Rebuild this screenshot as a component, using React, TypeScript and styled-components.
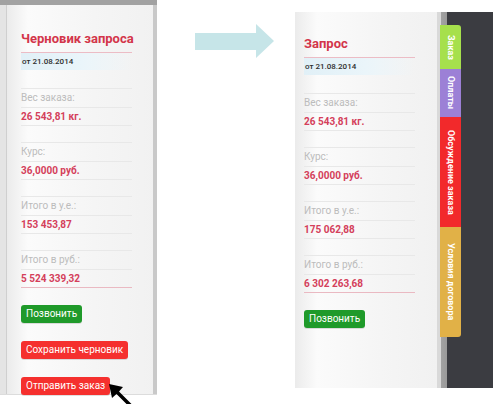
import React from "react";
import styled, { createGlobalStyle } from "styled-components";

const Global = createGlobalStyle`
  html, body { margin: 0; padding: 0; background: #fff; }
  * { box-sizing: border-box; }
`;

const Page = styled.div`
  position: relative;
  width: 493px;
  height: 404px;
  overflow: hidden;
  background: #fff;
  display: flex;
  align-items: flex-start;
  font-family: Roboto, "Liberation Sans", sans-serif;
`;

const Panel = styled.section<{ $framed?: boolean }>`
  width: ${(p) => (p.$framed ? "157px" : "142px")};
  height: ${(p) => (p.$framed ? "395px" : "376px")};
  flex: none;
  padding: ${(p) => (p.$framed ? "25px 0 0 21px" : "23px 0 0 9px")};
  background: ${(p) =>
    p.$framed
      ? "linear-gradient(to right, #e4e4e4 0, #e4e4e4 6px, #cfcfcf 6px, #cfcfcf 7px, #ebebeb 7px, #fbfbfb 28px, #f5f5f5 60%, #f1f1f1 100%)"
      : "linear-gradient(to right, #ebebeb 0, #fbfbfb 22px, #f5f5f5 60%, #f1f1f1 100%)"};
  border-top: ${(p) => (p.$framed ? "5px solid #a2a2a2" : "none")};
  border-bottom: ${(p) => (p.$framed ? "1px solid #dcdcdc" : "none")};
  box-shadow: ${(p) => (p.$framed ? "inset -4px 0 0 #c9c9c9" : "none")};
`;

const Column = styled.div`
  width: 111px;
  display: flex;
  flex-direction: column;
`;

const Title = styled.h2`
  margin: 0;
  font-size: 13px;
  line-height: 17px;
  font-weight: 700;
  color: #d3354a;
  padding-bottom: 5px;
  border-bottom: 1px solid #ecbcc5;
  white-space: nowrap;
`;

const DateBox = styled.div`
  height: 17px;
  line-height: 17px;
  font-size: 8px;
  font-weight: 500;
  color: #2e2e2e;
  padding-left: 1px;
  background: linear-gradient(to right, #e1f0f7 0, #eaf5fa 55%, rgba(255, 255, 255, 0) 100%);
  margin-bottom: 18px;
`;

const Field = styled.div`
  border-top: 1px solid #e8e8e8;
  margin-bottom: 16px;
`;

const Label = styled.div`
  height: 19px;
  line-height: 18px;
  font-size: 10px;
  color: #bcbcbc;
  border-bottom: 1px solid #e8e8e8;
`;

const Value = styled.div<{ $last?: boolean }>`
  height: 18px;
  line-height: 17px;
  font-size: 10px;
  font-weight: 700;
  color: #d4405b;
  border-bottom: 1px solid ${(p) => (p.$last ? "#eab9c2" : "#e8e8e8")};
  white-space: nowrap;
`;

const Actions = styled.div`
  display: flex;
  flex-direction: column;
  align-items: flex-start;
  gap: 18px;
  margin-top: 1px;
`;

const Button = styled.button<{ $tone: "green" | "red" }>`
  height: 18px;
  padding: 0 5px;
  border: none;
  border-radius: 3px;
  font-family: Roboto, "Liberation Sans", sans-serif;
  font-size: 10px;
  line-height: 18px;
  color: #fff;
  white-space: nowrap;
  background: ${(p) => (p.$tone === "green" ? "#1f9a2a" : "#f5302e")};
  box-shadow: 0 1px 0 rgba(0, 0, 0, 0.12);
`;

const ArrowWrap = styled.div`
  margin: 24px 0 0 38px;
  width: 79px;
  height: 34px;
  flex: none;
`;

const RightFrame = styled.div`
  display: flex;
  margin: 12px 0 0 21px;
  flex: none;
`;

const Rail = styled.div`
  width: 56px;
  height: 376px;
  padding: 13px 0 0 3px;
  background: linear-gradient(
    to right,
    #d9d9d9 0,
    #d9d9d9 4px,
    #a2a2a2 4px,
    #9a9a9a 10px,
    #3b3c41 10px,
    #3b3c41 100%
  );
  display: flex;
  flex-direction: column;
`;

const Tab = styled.div<{ $color: string; $h: number; $pos?: "first" | "last" }>`
  width: 21px;
  height: ${(p) => p.$h}px;
  background: ${(p) => p.$color};
  border-radius: ${(p) =>
    p.$pos === "first" ? "0 3px 0 0" : p.$pos === "last" ? "0 0 3px 0" : "0"};
  display: flex;
  align-items: center;
  justify-content: center;
`;

const TabText = styled.span`
  writing-mode: vertical-rl;
  font-size: 9px;
  font-weight: 700;
  color: #fff;
  white-space: nowrap;
  line-height: 9px;
`;

const Cursor = styled.svg`
  position: absolute;
  left: 109px;
  top: 384px;
`;

type Row = { label: string; value: string };

function Sheet({
  title,
  rows,
  framed,
  buttons,
}: {
  title: string;
  rows: Row[];
  framed?: boolean;
  buttons: { text: string; tone: "green" | "red" }[];
}) {
  return (
    <Panel $framed={framed}>
      <Column>
        <Title>{title}</Title>
        <DateBox>от 21.08.2014</DateBox>
        {rows.map((r, i) => (
          <Field key={r.label}>
            <Label>{r.label}</Label>
            <Value $last={i === rows.length - 1}>{r.value}</Value>
          </Field>
        ))}
        <Actions>
          {buttons.map((b) => (
            <Button key={b.text} $tone={b.tone}>
              {b.text}
            </Button>
          ))}
        </Actions>
      </Column>
    </Panel>
  );
}

export default function App() {
  const leftRows: Row[] = [
    { label: "Вес заказа:", value: "26 543,81 кг." },
    { label: "Курс:", value: "36,0000 руб." },
    { label: "Итого в у.е.:", value: "153 453,87" },
    { label: "Итого в руб.:", value: "5 524 339,32" },
  ];
  const rightRows: Row[] = [
    { label: "Вес заказа:", value: "26 543,81 кг." },
    { label: "Курс:", value: "36,0000 руб." },
    { label: "Итого в у.е.:", value: "175 062,88" },
    { label: "Итого в руб.:", value: "6 302 263,68" },
  ];
  return (
    <>
      <Global />
      <Page>
        <Sheet
          framed
          title="Черновик запроса"
          rows={leftRows}
          buttons={[
            { text: "Позвонить", tone: "green" },
            { text: "Сохранить черновик", tone: "red" },
            { text: "Отправить заказ", tone: "red" },
          ]}
        />
        <ArrowWrap>
          <svg width="79" height="34" viewBox="0 0 79 34">
            <polygon points="0,9 61,9 61,0 79,17 61,34 61,26 0,26" fill="#c6e5e8" />
          </svg>
        </ArrowWrap>
        <RightFrame>
          <Sheet title="Запрос" rows={rightRows} buttons={[{ text: "Позвонить", tone: "green" }]} />
          <Rail>
            <Tab $color="#a6e04c" $h={44} $pos="first">
              <TabText>Заказ</TabText>
            </Tab>
            <Tab $color="#9c80d6" $h={48}>
              <TabText>Оплаты</TabText>
            </Tab>
            <Tab $color="#f2292b" $h={110}>
              <TabText>Обсуждение заказа</TabText>
            </Tab>
            <Tab $color="#e1b147" $h={110} $pos="last">
              <TabText>Условия договора</TabText>
            </Tab>
          </Rail>
        </RightFrame>
        <Cursor width="30" height="30" viewBox="0 0 30 30">
          <polygon
            points="0,0 14,3 10,7.5 27,24.5 24.5,27 7.5,10 3,14"
            fill="#000"
          />
        </Cursor>
      </Page>
    </>
  );
}
